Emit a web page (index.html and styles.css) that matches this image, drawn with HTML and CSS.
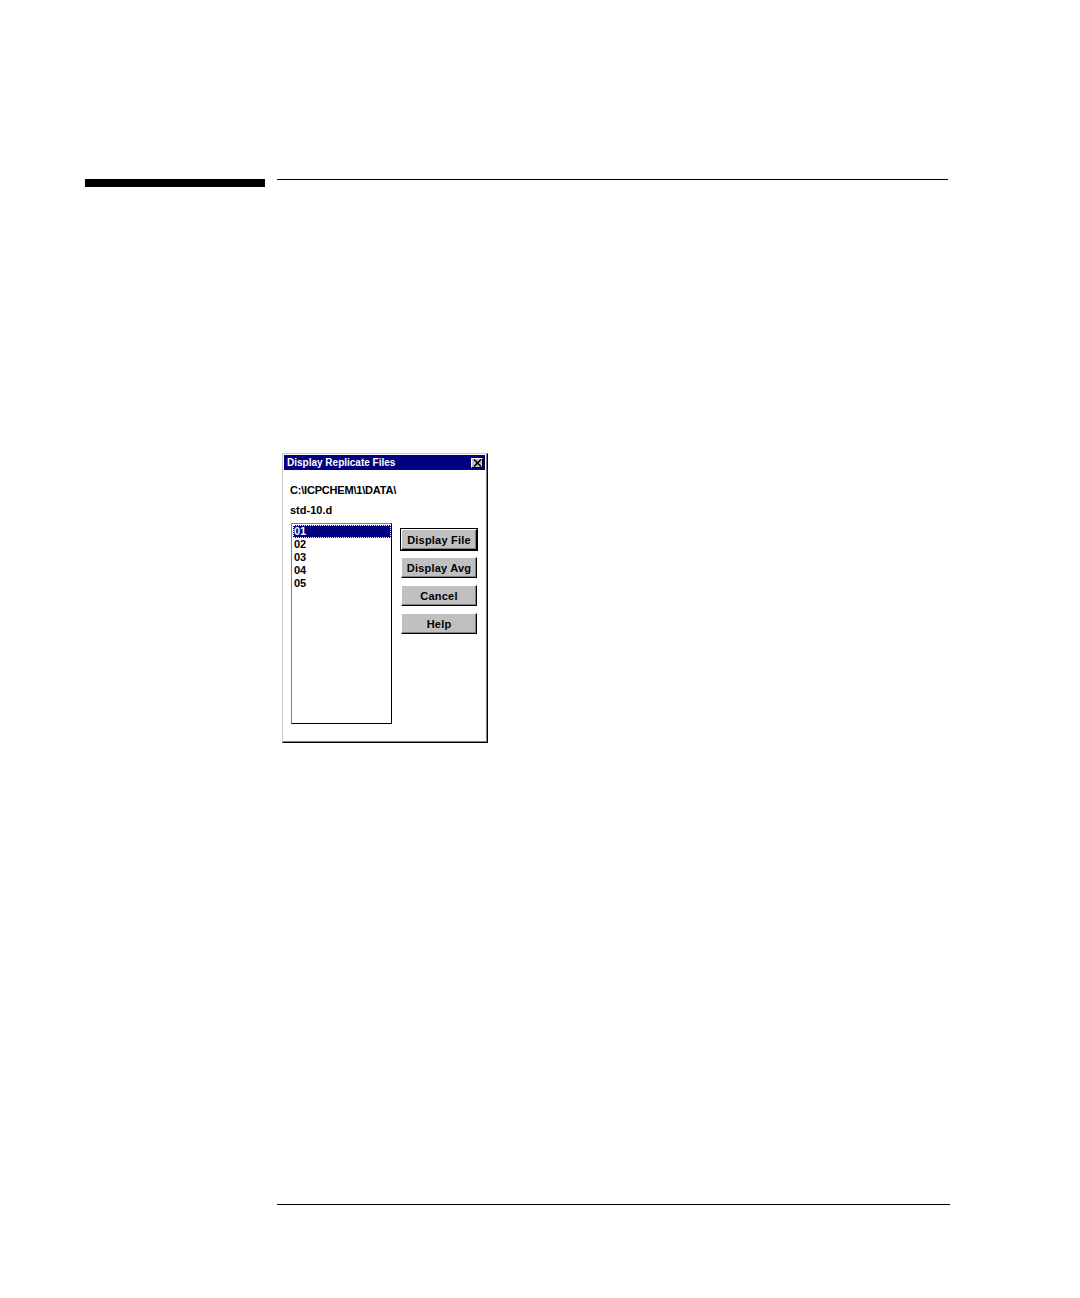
FILE: index.html
```html
<!DOCTYPE html>
<html>
<head>
<meta charset="utf-8">
<link rel="stylesheet" href="styles.css">
</head>
<body>
<div class="page">
  <div class="header">
    <div class="bar"></div>
    <div class="rule"></div>
  </div>
  <div class="dialog">
    <div class="titlebar">
      <span class="title">Display Replicate Files</span>
      <span class="close">
        <svg width="9" height="8" viewBox="0 0 9 8"><path d="M1 0.5 L8 7.5 M8 0.5 L1 7.5" stroke="#000" stroke-width="1.6"/></svg>
      </span>
    </div>
    <div class="body">
      <div class="path">C:\ICPCHEM\1\DATA\</div>
      <div class="file">std-10.d</div>
      <div class="main">
        <div class="list">
          <div class="item sel">01</div>
          <div class="item">02</div>
          <div class="item">03</div>
          <div class="item">04</div>
          <div class="item">05</div>
        </div>
        <div class="buttons">
          <div class="btn">Display File</div>
          <div class="btn">Display Avg</div>
          <div class="btn">Cancel</div>
          <div class="btn">Help</div>
        </div>
      </div>
    </div>
  </div>
  <div class="footer"></div>
</div>
</body>
</html>
```
FILE: styles.css
```css
* { box-sizing: border-box; }
html, body { margin: 0; padding: 0; background: #fff; }
body { font-family: "Liberation Sans", Arial, sans-serif; }
.page { width: 1080px; height: 1298px; position: relative; }
.header { display: flex; align-items: flex-start; padding-top: 179px; padding-left: 85px; }
.bar { width: 180px; height: 8px; background: #000; }
.rule { width: 671px; height: 1px; background: #000; margin-left: 12px; }
.dialog {
  margin-left: 282px; margin-top: 266px;
  width: 206px; height: 290px;
  border-top: 1px solid #c8c8c8; border-left: 1px solid #c8c8c8;
  border-right: 1px solid #000; border-bottom: 1px solid #000;
  box-shadow: inset -1px -1px 0 #808080;
  background: #fff;
  padding: 1px 2px 2px 1px;
  display: flex; flex-direction: column;
}
.titlebar {
  height: 15px; background: #000080; color: #fff;
  display: flex; align-items: center; justify-content: space-between;
  padding: 0 2px 0 3px;
}
.title { font-size: 10px; font-weight: bold; letter-spacing: 0px; }
.close {
  width: 12px; height: 10px; background: #c0c0c0;
  border-top: 1px solid #fff; border-left: 1px solid #fff;
  border-right: 1px solid #000; border-bottom: 1px solid #000;
  display: flex; align-items: center; justify-content: center;
}
.body { flex: 1; padding: 13px 0 0 6px; font-size: 11px; font-weight: bold; color: #000; }
.path { height: 20px; line-height: 14px; letter-spacing: -0.2px; }
.file { height: 15px; line-height: 14px; }
.main { display: flex; margin-top: 5px; }
.list {
  margin-left: 1px;
  width: 101px; height: 201px;
  border-top: 1px solid #808080; border-left: 1px solid #808080;
  border-right: 1px solid #000; border-bottom: 1px solid #000;
  padding: 1px 0 0 1px;
}
.item { height: 13px; line-height: 13px; padding-left: 1px; font-size: 11px; }
.item.sel { background: #000080; color: #fff; outline: 1px dotted #fff; outline-offset: -1px; }
.buttons { display: flex; flex-direction: column; gap: 7px; margin-left: 9px; margin-top: 6px; }
.btn {
  width: 76px; height: 21px; background: #c0c0c0;
  border-top: 1px solid #fff; border-left: 1px solid #fff;
  border-right: 1px solid #000; border-bottom: 1px solid #000;
  box-shadow: inset -1px -1px 0 #808080;
  display: flex; align-items: center; justify-content: center;
  font-size: 11px; letter-spacing: 0.2px;
}
.btn:first-child { outline: 1px solid #000; }
.footer { position: absolute; left: 277px; top: 1204px; width: 673px; height: 1px; background: #000; }
```
